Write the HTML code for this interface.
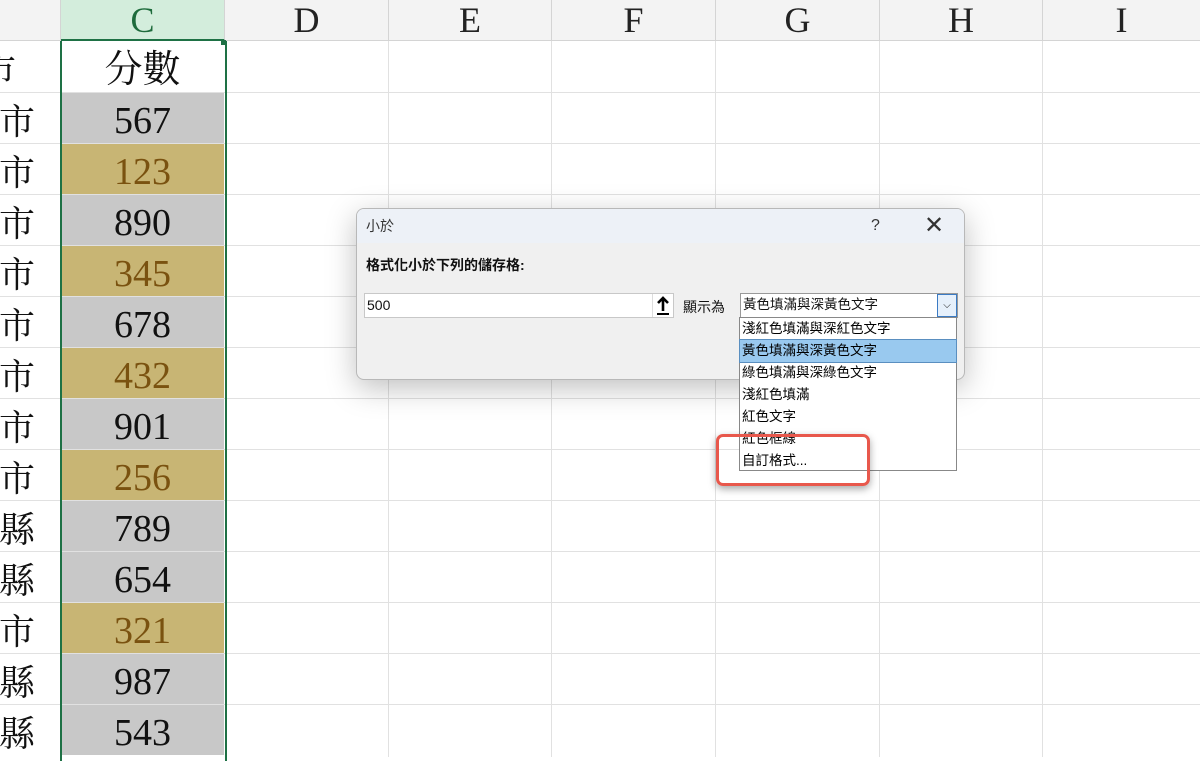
<!DOCTYPE html>
<html><head><meta charset="utf-8"><style>
body{margin:0;width:1200px;height:757px;overflow:hidden;background:#fff;position:relative;font-family:"Liberation Sans","Noto Sans CJK TC",sans-serif}
.hdr{position:absolute;top:0;height:41px;border-right:1px solid #d4d4d4;border-bottom:1px solid #d4d4d4;background:#f3f3f3;font:36px "Liberation Serif",serif;text-align:center;line-height:41px;color:#222;box-sizing:border-box}
.vl{position:absolute;top:41px;height:716px;width:1px;background:#e1e1e1}
.hl{position:absolute;left:0;width:1200px;height:1px;background:#e1e1e1}
.cell{position:absolute;left:61px;width:163px;height:50px;text-align:center;font:38px "Liberation Serif","Noto Serif CJK SC",serif;line-height:56px;color:#111}
.a{position:absolute;left:-1px;font:36px "Noto Serif CJK SC",serif;line-height:54px;color:#111}
.g{background:#c8c8c8}.y{background:#c8b574;color:#7a5210}
.dlg{position:absolute;left:356px;top:208px;width:607px;height:170px;background:#f0f0f0;border:1px solid #b8b8b8;border-radius:8px;box-shadow:0 8px 30px rgba(0,0,0,.25);overflow:hidden;font-size:14px;color:#111}
.li{height:22px;line-height:22px;padding-left:2px;font-size:13.5px}
</style></head><body>
<div class="hdr" style="left:0;width:61px"></div>
<div class="hdr" style="left:61px;width:164px;background:#d3eddc;color:#1e6b3c;border-bottom:2px solid #1e7145">C</div>
<div class="hdr" style="left:225px;width:164px">D</div>
<div class="hdr" style="left:389px;width:163px">E</div>
<div class="hdr" style="left:552px;width:164px">F</div>
<div class="hdr" style="left:716px;width:164px">G</div>
<div class="hdr" style="left:880px;width:163px">H</div>
<div class="hdr" style="left:1043px;width:157px;border-right:none">I</div>
<div class="vl" style="left:388px"></div><div class="vl" style="left:551px"></div><div class="vl" style="left:715px"></div><div class="vl" style="left:879px"></div><div class="vl" style="left:1042px"></div>
<div class="hl" style="top:92px"></div><div class="hl" style="top:143px"></div><div class="hl" style="top:194px"></div><div class="hl" style="top:245px"></div><div class="hl" style="top:296px"></div><div class="hl" style="top:347px"></div><div class="hl" style="top:398px"></div><div class="hl" style="top:449px"></div><div class="hl" style="top:500px"></div><div class="hl" style="top:551px"></div><div class="hl" style="top:602px"></div><div class="hl" style="top:653px"></div><div class="hl" style="top:704px"></div>
<div class="a" style="top:42px;left:-20px">市</div>
<div class="a" style="top:93px">市</div><div class="a" style="top:144px">市</div><div class="a" style="top:195px">市</div><div class="a" style="top:246px">市</div><div class="a" style="top:297px">市</div><div class="a" style="top:348px">市</div><div class="a" style="top:399px">市</div><div class="a" style="top:450px">市</div><div class="a" style="top:501px">縣</div><div class="a" style="top:552px">縣</div><div class="a" style="top:603px">市</div><div class="a" style="top:654px">縣</div><div class="a" style="top:705px">縣</div>
<div class="cell" style="top:42px;background:#fff">分數</div>
<div class="cell g" style="top:93px">567</div><div class="cell y" style="top:144px">123</div><div class="cell g" style="top:195px">890</div><div class="cell y" style="top:246px">345</div><div class="cell g" style="top:297px">678</div><div class="cell y" style="top:348px">432</div><div class="cell g" style="top:399px">901</div><div class="cell y" style="top:450px">256</div><div class="cell g" style="top:501px">789</div><div class="cell g" style="top:552px">654</div><div class="cell y" style="top:603px">321</div><div class="cell g" style="top:654px">987</div><div class="cell g" style="top:705px">543</div>
<div style="position:absolute;left:60px;top:41px;width:163px;height:720px;border:1px solid #1e7145;border-width:0 2px 0 2px"></div>
<div style="position:absolute;left:221px;top:40px;width:5px;height:5px;background:#1e7145"></div>
<div class="dlg">
<div style="height:34px;background:#edf1f7;line-height:34px;padding-left:9px;color:#333">小於<span style="position:absolute;left:514px;font-size:16px">?</span><span style="position:absolute;left:567px;font-size:24px;font-weight:300">✕</span></div>
<div style="position:absolute;left:9px;top:46px;font-weight:bold">格式化小於下列的儲存格:</div>
<div style="position:absolute;left:7px;top:84px;width:306px;height:23px;background:#fff;border:1px solid #c8c8c8;line-height:23px;padding-left:2px">500<div style="position:absolute;right:0;top:0;width:20px;height:23px;border-left:1px solid #ddd">
<svg width="20" height="23" viewBox="0 0 20 23"><path d="M10 4 L10 17 M5 9 L10 4 L15 9" stroke="#000" stroke-width="2.6" fill="none"/><path d="M4 20 H16" stroke="#000" stroke-width="2"/></svg></div></div>
<div style="position:absolute;left:326px;top:88px">顯示為</div>
<div style="position:absolute;left:383px;top:84px;width:214px;height:23px;background:#fff;border:1px solid #999;line-height:21px;padding-left:2px;font-size:13.5px">黃色填滿與深黃色文字<div style="position:absolute;right:0;top:0;width:18px;height:21px;border:1px solid #3b7bc4;background:#e6f0fb;text-align:center;font-size:10px">⌵</div></div>
</div>
<div style="position:absolute;left:739px;top:317px;width:216px;height:152px;background:#fff;border:1px solid #888">
<div class="li">淺紅色填滿與深紅色文字</div>
<div class="li" style="background:#99c9ef;outline:1px solid #5a8fc0">黃色填滿與深黃色文字</div>
<div class="li">綠色填滿與深綠色文字</div>
<div class="li">淺紅色填滿</div>
<div class="li">紅色文字</div>
<div class="li">紅色框線</div>
<div class="li">自訂格式...</div>
</div>
<div style="position:absolute;left:716px;top:434px;width:148px;height:46px;border:3px solid #e8584c;border-radius:7px;box-shadow:0 3px 8px rgba(0,0,0,.35)"></div>
</body></html>
